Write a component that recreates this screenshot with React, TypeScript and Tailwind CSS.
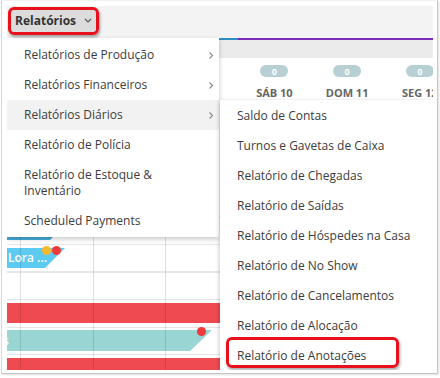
import React from "react";

const font = { fontFamily: '"Open Sans", "Noto Sans", sans-serif' };

function Chevron() {
  return (
    <svg width="6" height="9" viewBox="0 0 6 9" className="text-[#8a8a8a]">
      <polyline points="1.5,1.5 4.5,4.5 1.5,7.5" fill="none" stroke="currentColor" strokeWidth="1.1" />
    </svg>
  );
}

const menu1: { label: React.ReactNode; sub?: boolean; active?: boolean }[] = [
  { label: "Relatórios de Produção", sub: true },
  { label: "Relatórios Financeiros", sub: true },
  { label: "Relatórios Diários", sub: true, active: true },
  { label: "Relatório de Polícia" },
  { label: (<>Relatório de Estoque &amp;<br />Inventário</>) },
  { label: "Scheduled Payments" },
];

const menu2 = [
  "Saldo de Contas",
  "Turnos e Gavetas de Caixa",
  "Relatório de Chegadas",
  "Relatório de Saídas",
  "Relatório de Hóspedes na Casa",
  "Relatório de No Show",
  "Relatório de Cancelamentos",
  "Relatório de Alocação",
  "Relatório de Anotações",
];

const days = ["", "", "", "SÁB 10", "DOM 11", "SEG 12"];

export default function App() {
  return (
    <div className="w-[440px] h-[378px] bg-white overflow-hidden" style={font}>
      <div className="ml-[1px] w-[437px] h-[374px] border-l border-r border-b border-t border-l-[#d8d8d8] border-r-[#c8c8c8] border-b-[#c4c4c4] border-t-[#f2f2f2] pl-[5px] pt-[5px] shadow-[1px_1px_2px_rgba(0,0,0,0.12)]">
        <div className="relative w-[426px] h-[364px] overflow-hidden bg-white">
          {/* top bar */}
          <div className="h-[32px] bg-[#f3f3f3] flex items-start pt-[3px]">
            <div className="ml-[3px] h-[23px] w-[86px] bg-[#dcdcdc] flex items-center pl-[5px] gap-[8px]">
              <span className="text-[12px] font-bold text-[#333] leading-none">Relatórios</span>
              <svg width="8" height="5" viewBox="0 0 8 5" className="text-[#555]">
                <polyline points="1,1 4,4 7,1" fill="none" stroke="currentColor" strokeWidth="1.2" />
              </svg>
            </div>
          </div>
          {/* progress line */}
          <div className="h-[2px] flex">
            <div className="w-[231px] bg-[#2d8fc0]" />
            <div className="flex-1 bg-[#7a2cb8]" />
          </div>
          {/* gray band */}
          <div className="h-[18px] bg-[#ebebeb]" />
          {/* day header */}
          <div className="h-[42px] grid grid-cols-[13px_repeat(6,72.7px)]">
            <div />
            {days.map((d, i) => (
              <div key={i} className="flex flex-col items-center pt-[7px]">
                {d ? (
                  <>
                    <div className="w-[28px] h-[12px] rounded-full bg-[#b8cfd4] flex items-center justify-center text-[9px] font-bold text-white leading-none">0</div>
                    <div className="mt-[10px] text-[11px] font-bold text-[#666] leading-none whitespace-nowrap">{d}</div>
                  </>
                ) : null}
              </div>
            ))}
          </div>
          {/* calendar body */}
          <div className="relative">
            <div className="h-[116px]" />
            {/* row with blue bar */}
            <div className="h-[28px] border-t border-[#e4e4e4] pt-[3px]">
              <div className="h-[20px] w-[63px] bg-[#45aedb] [clip-path:polygon(0_0,100%_0,calc(100%-20px)_100%,0_100%)]" />
            </div>
            {/* Lora row */}
            <div className="h-[27px] border-t border-[#e4e4e4] pt-[3px] relative">
              <div className="h-[20px] w-[58px] bg-[#5dcaf2] [clip-path:polygon(0_0,100%_0,calc(100%-20px)_100%,0_100%)] flex items-center pl-[1px]">
                <span className="text-[12px] font-semibold text-white leading-none whitespace-nowrap">Lora ...</span>
              </div>
              <div className="absolute left-[35px] top-[1px] w-[9px] h-[9px] rounded-full bg-[#f6b92b]" />
              <div className="absolute left-[45px] top-[1px] w-[9px] h-[9px] rounded-full bg-[#ef3b3b]" />
            </div>
            {/* empty row */}
            <div className="h-[28px] border-t-2 border-[#e8e8e8]" />
            {/* red row */}
            <div className="h-[28px] border-t border-[#e4e4e4] pt-[3px]">
              <div className="h-[20px] bg-[#ef4a52]" />
            </div>
            {/* teal row */}
            <div className="h-[27px] border-t border-[#e4e4e4] pt-[2px] relative">
              <div className="h-[21px] w-[205px] bg-[#99d6d3] [clip-path:polygon(0_0,100%_0,calc(100%-22px)_100%,0_100%)] flex items-center">
                <span className="text-[12px] font-semibold text-white leading-none -ml-[4px]">s</span>
              </div>
              <div className="absolute left-[190px] top-[-1px] w-[9px] h-[9px] rounded-full bg-[#ef3b3b]" />
            </div>
            {/* red row bottom */}
            <div className="h-[28px] border-t border-[#e4e4e4] pt-[3px]">
              <div className="h-[20px] bg-[#ef4a52]" />
            </div>
            {/* grid lines overlay */}
            <div className="absolute inset-0 pointer-events-none grid grid-cols-[13px_repeat(6,72.7px)]">
              <div />
              {days.map((d, i) => (
                <div key={i} className="border-l border-[rgba(0,0,0,0.12)]" />
              ))}
            </div>
          </div>

          {/* menu 1 */}
          <div className="absolute left-0 top-[32px] w-[212px] bg-white pt-[2px] pb-[1px] shadow-[0_2px_5px_rgba(0,0,0,0.22)] text-[12px] text-[#3c3c3c]">
            {menu1.map((m, i) => (
              <div
                key={i}
                className={`flex items-center justify-between pl-[17px] pr-[5px] py-[7px] leading-[16px] ${m.active ? "bg-[#f2f2f2]" : ""}`}
              >
                <span>{m.label}</span>
                {m.sub ? <Chevron /> : null}
              </div>
            ))}
          </div>

          {/* submenu */}
          <div className="absolute left-[213px] top-[94px] right-0 bottom-0 bg-white pt-[1px] shadow-[-1px_1px_4px_rgba(0,0,0,0.2)] text-[12px] text-[#3c3c3c]">
            {menu2.map((m) => (
              <div key={m} className="h-[30px] flex items-center pl-[17px] leading-[16px] whitespace-nowrap">
                {m}
              </div>
            ))}
          </div>

          {/* annotation boxes */}
          <div className="absolute left-[1px] top-[1px] w-[91px] h-[28px] rounded-[6px] border-[3px] border-[#e8101a] shadow-[1px_2px_3px_rgba(0,0,0,0.35)] pointer-events-none" />
          <div className="absolute left-[219px] top-[331px] w-[173px] h-[31px] rounded-[6px] border-[3px] border-[#e8101a] shadow-[1px_2px_3px_rgba(0,0,0,0.35)] pointer-events-none" />
        </div>
      </div>
    </div>
  );
}
